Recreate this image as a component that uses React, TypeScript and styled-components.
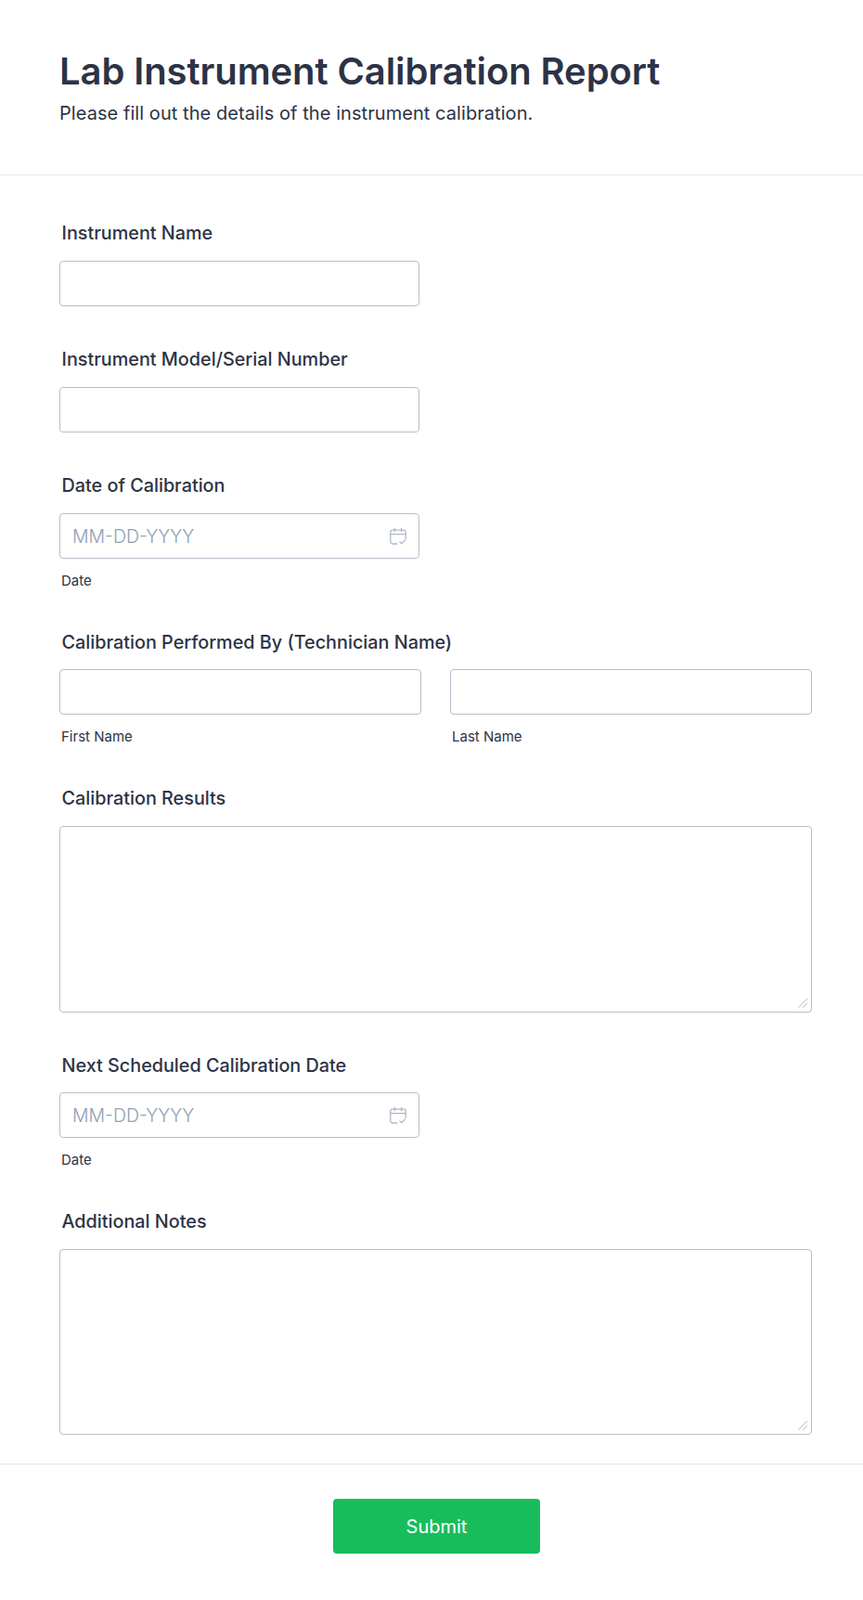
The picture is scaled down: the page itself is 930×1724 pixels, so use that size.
import React from 'react';
import styled, { createGlobalStyle } from 'styled-components';

const GlobalStyle = createGlobalStyle`
  html, body {
    margin: 0;
    padding: 0;
    background: #fff;
    font-family: Inter, "Liberation Sans", sans-serif;
    color: #2c3345;
  }
  * {
    box-sizing: border-box;
  }
`;

const CalendarIcon = () => (
  <IconSvg viewBox="0 0 18 18" fill="none" stroke="currentColor" strokeWidth="1.3" strokeLinecap="round" strokeLinejoin="round">
    <path d="M8 17H2.9A2.1 2.1 0 0 1 .8 14.9V4.3a2.1 2.1 0 0 1 2.1-2.1h12.2a2.1 2.1 0 0 1 2.1 2.1v7" />
    <path d="M.8 6.6h16.4" />
    <path d="M5.4 .6v3.2M12.6 .6v3.2" />
    <path d="M10.8 14.9l1.9 1.9 3.9-3.9" />
  </IconSvg>
);

const App = () => (
  <Page>
    <GlobalStyle />
    <Header>
      <Title>Lab Instrument Calibration Report</Title>
      <Subtitle>Please fill out the details of the instrument calibration.</Subtitle>
    </Header>

    <Form onSubmit={(e): void => e.preventDefault()}>
      <Field>
        <Label>Instrument Name</Label>
        <ShortInput type="text" />
      </Field>

      <Field>
        <Label>Instrument Model/Serial Number</Label>
        <ShortInput type="text" />
      </Field>

      <Field>
        <Label>Date of Calibration</Label>
        <DateBox>
          <DateInput type="text" placeholder="MM-DD-YYYY" />
          <CalendarIcon />
        </DateBox>
        <SubLabel>Date</SubLabel>
      </Field>

      <Field>
        <Label $tight>Calibration Performed By (Technician Name)</Label>
        <NameRow>
          <div>
            <WideInput type="text" />
            <SubLabel>First Name</SubLabel>
          </div>
          <div>
            <WideInput type="text" />
            <SubLabel>Last Name</SubLabel>
          </div>
        </NameRow>
      </Field>

      <Field>
        <Label>Calibration Results</Label>
        <Area $height={201} />
      </Field>

      <Field>
        <Label $tight>Next Scheduled Calibration Date</Label>
        <DateBox>
          <DateInput type="text" placeholder="MM-DD-YYYY" />
          <CalendarIcon />
        </DateBox>
        <SubLabel>Date</SubLabel>
      </Field>

      <LastField>
        <Label>Additional Notes</Label>
        <Area $height={200} />
      </LastField>

      <Footer>
        <SubmitButton type="submit">Submit</SubmitButton>
      </Footer>
    </Form>
  </Page>
);

const Page = styled.div`
  width: 930px;
  height: 1724px;
  overflow: hidden;
  background: #fff;
`;

const Header = styled.header`
  height: 189px;
  padding: 53px 64px 0;
  border-bottom: 1px solid #e3e5ee;
`;

const Title = styled.h1`
  margin: 0;
  font-size: 40px;
  line-height: 48px;
  font-weight: 600;
  letter-spacing: -0.1px;
  color: #2c3345;
`;

const Subtitle = styled.p`
  margin: 9px 0 0;
  font-size: 20px;
  line-height: 24px;
  font-weight: 400;
  letter-spacing: 0.06px;
  color: #2c3345;
`;

const Form = styled.form`
  padding-top: 50px;
`;

const Field = styled.div`
  padding: 0 54px 45px 64px;
`;

const LastField = styled(Field)`
  padding-bottom: 31px;
`;

const Label = styled.label<{ $tight?: boolean }>`
  display: block;
  margin: 0 0 ${(props) => (props.$tight ? '17px' : '18px')} 2.5px;
  font-size: 19.8px;
  line-height: 24px;
  font-weight: 500;
  color: #2c3345;
`;

const SubLabel = styled.span`
  display: block;
  margin: 15px 0 0 2px;
  font-size: 15px;
  line-height: 18px;
  color: #2c3345;
`;

const inputBox = `
  display: block;
  height: 49px;
  border: 1px solid #b8bdc9;
  border-radius: 4px;
  background: #fff;
  outline: none;
`;

const ShortInput = styled.input`
  ${inputBox}
  width: 388px;
  padding: 0 13px;
  font: inherit;
`;

const WideInput = styled.input`
  ${inputBox}
  width: 100%;
  padding: 0 13px;
  font: inherit;
`;

const DateBox = styled.div`
  ${inputBox}
  display: flex;
  align-items: center;
  width: 388px;
  padding: 0 13px;
`;

const DateInput = styled.input`
  flex: 1;
  min-width: 0;
  height: 100%;
  padding: 0;
  border: none;
  outline: none;
  background: transparent;
  font-family: inherit;
  font-size: 19.5px;
  font-weight: 300;
  color: #2c3345;

  &::placeholder {
    color: #8fa0b5;
    opacity: 1;
  }
`;

const IconSvg = styled.svg`
  width: 18px;
  height: 18px;
  color: #b0b8c5;
  flex-shrink: 0;
`;

const NameRow = styled.div`
  display: grid;
  grid-template-columns: 390px 390px;
  column-gap: 31px;
`;

const Area = styled.textarea<{ $height: number }>`
  display: block;
  width: 811px;
  height: ${(props) => props.$height}px;
  padding: 10px 13px;
  border: 1px solid #b8bdc9;
  border-radius: 4px;
  background: #fff;
  outline: none;
  resize: vertical;
  font: inherit;

  &::-webkit-resizer {
    background-image: linear-gradient(
      135deg,
      transparent 52%,
      #b8bdc9 52%,
      #b8bdc9 58%,
      transparent 58%,
      transparent 74%,
      #b8bdc9 74%,
      #b8bdc9 80%,
      transparent 80%
    );
    background-size: 11px 11px;
    background-repeat: no-repeat;
  }
`;

const Footer = styled.div`
  display: flex;
  justify-content: center;
  height: 147px;
  padding: 37px 0 0 11px;
  border-top: 1px solid #e3e5ee;
`;

const SubmitButton = styled.button`
  width: 223px;
  height: 59px;
  border: none;
  border-radius: 4px;
  background: #18bd5b;
  color: #fff;
  font-family: inherit;
  font-size: 20px;
  font-weight: 400;
  cursor: pointer;
`;

export default App;
